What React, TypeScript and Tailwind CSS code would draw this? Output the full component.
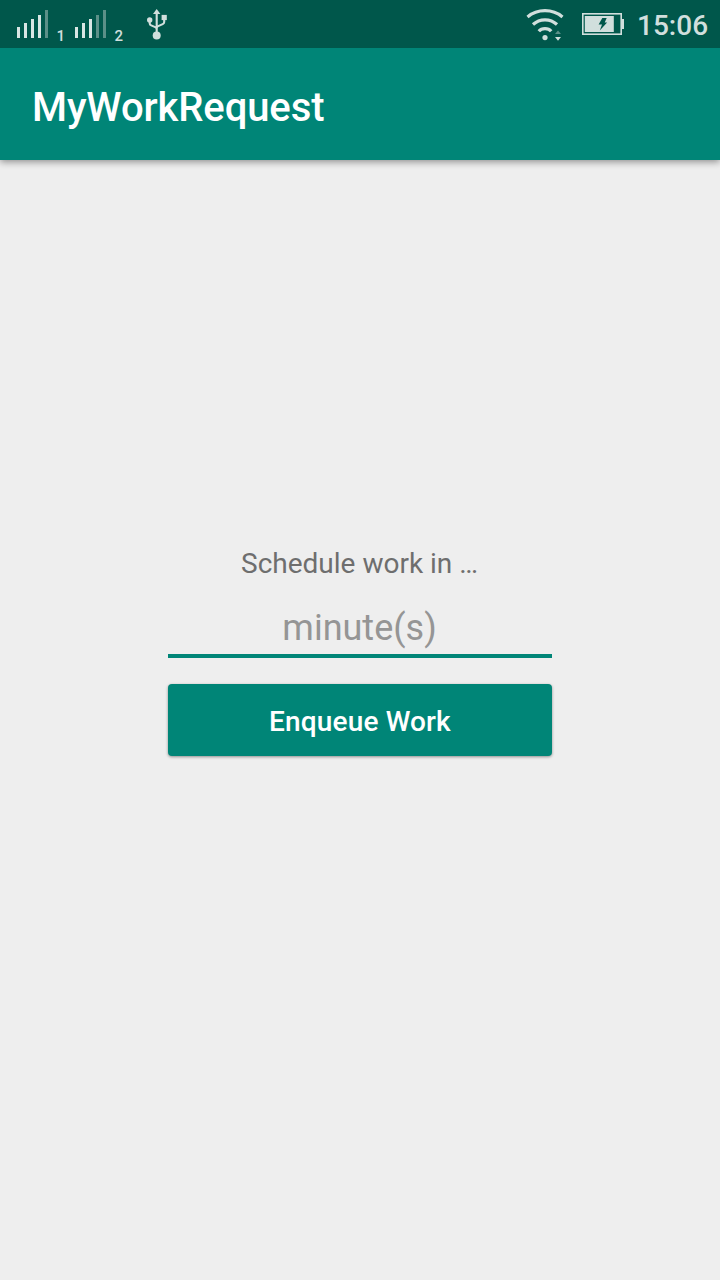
function Signal({ level }: { level: number }) {
  const tops = [27, 23, 19, 15, 10];
  return (
    <svg width="31" height="48" viewBox="0 0 31 48" shapeRendering="crispEdges" className="shrink-0">
      {tops.map((top, i) => (
        <rect key={top} x={i * 7} y={top} width="3" height={38 - top} fill={i < level ? '#d9e6e4' : '#5b9088'} />
      ))}
    </svg>
  );
}

function Usb() {
  return (
    <svg width="22" height="48" viewBox="146 0 22 48" className="shrink-0" fill="#d1dfdd">
      <path d="M156.7 9l3.7 5h-7.4z" />
      <circle cx="156.7" cy="35.6" r="4" />
      <circle cx="149.7" cy="20" r="2.7" />
      <rect x="161.6" y="14.9" width="5.2" height="5.2" />
      <path
        d="M156.7 13v20M149.7 21v2.2q0 1.6 1.5 2.2l4 1.7q1.5.6 1.5 2.4M164.2 19v2.9q0 1.5-1.5 2.2l-4.5 2q-1.5.6-1.5 2.4"
        fill="none"
        stroke="#d1dfdd"
        strokeWidth="2.1"
      />
    </svg>
  );
}

function Wifi() {
  return (
    <svg width="40" height="48" viewBox="526 0 40 48" className="shrink-0" fill="#d1dfdd">
      <g fill="none" stroke="#d1dfdd" strokeWidth="3.2">
        <path d="M527.5 16.9Q535 10.7 545 10.7T562.5 16.9" />
        <path d="M533 24.5Q538 19.8 545 19.8T557 24.5" />
        <path d="M538.8 31.3Q541 28.7 545 28.7T551.2 31.3" />
      </g>
      <circle cx="545" cy="37.6" r="2.6" />
      <path d="M555 34l3-3.6 3 3.6z" fill="#5b9088" />
      <path d="M555 37h6l-3 3.7z" />
    </svg>
  );
}

function Battery() {
  return (
    <svg width="42" height="48" viewBox="582 0 42 48" className="shrink-0">
      <rect x="582.8" y="13.8" width="38.4" height="20.4" fill="none" stroke="#d1dfdd" strokeWidth="1.6" />
      <rect x="584.8" y="16" width="29" height="16" fill="#d1dfdd" />
      <rect x="622" y="19" width="2" height="10" fill="#d1dfdd" />
      <path d="M602.3 18h4.4l-2 4.4h2.4l-7.3 8 2.2-6h-3.4z" fill="#00574b" />
    </svg>
  );
}

export default function App() {
  return (
    <div className="flex h-[1280px] w-[720px] flex-col overflow-hidden bg-[#eeeeee] font-[Roboto,sans-serif]">
      <div className="z-10 flex h-12 shrink-0 items-center bg-[#00574b] pr-3 pl-[17px] text-[#d1dfdd]">
        <Signal level={4} />
        <span className="mt-[24px] ml-[8.5px] w-[18.5px] text-[15px] leading-none font-medium">1</span>
        <Signal level={3} />
        <span className="mt-[24px] ml-[8.5px] w-[31.5px] text-[15px] leading-none font-medium">2</span>
        <Usb />
        <div className="grow" />
        <Wifi />
        <div className="w-4 shrink-0" />
        <Battery />
        <span className="mt-[3px] ml-[13px] w-[71px] text-[28px] leading-none font-medium whitespace-nowrap">15:06</span>
      </div>
      <header className="flex h-28 shrink-0 items-center bg-[#008577] px-8 shadow-[0_2px_7px_rgba(0,0,0,0.4)]">
        <h1 className="mt-[7px] text-[40px] leading-none font-medium tracking-[-0.1px] text-white">MyWorkRequest</h1>
      </header>
      <main className="mx-auto flex w-96 flex-col pt-[385px] text-center">
        <label htmlFor="minutes" className="-ml-px h-[38px] text-[28px] leading-[38px] text-[#6e6e6e]">
          Schedule work in …
        </label>
        <input
          id="minutes"
          placeholder="minute(s)"
          className="mt-[19px] h-14 border-b-4 border-[#008577] bg-transparent pr-px text-center text-[36px] leading-[52px] outline-none placeholder:text-[#959595]"
        />
        <button className="mt-[26px] h-[72px] rounded-[4px] bg-[#008577] pt-[3px] text-[28px] font-medium tracking-[0.15px] text-white shadow-[0_1px_3px_rgba(0,0,0,0.4)]">
          Enqueue Work
        </button>
      </main>
    </div>
  );
}
